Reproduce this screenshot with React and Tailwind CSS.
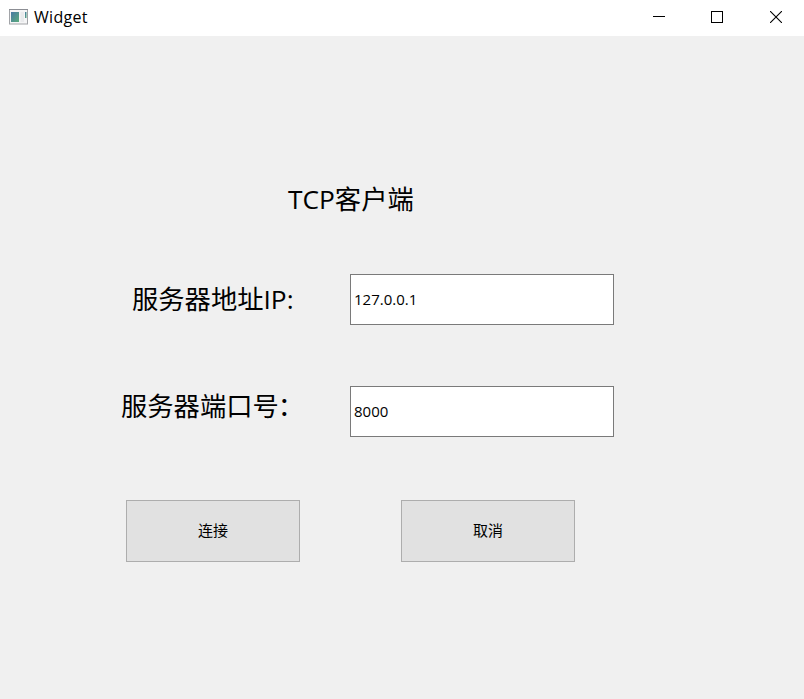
const uiFont = "font-['Open_Sans','Noto_Sans_CJK_SC',sans-serif]";

function AppIcon() {
  return (
    <svg className="-mt-0.5" width="19" height="16" viewBox="0 0 19 16">
      <defs>
        <linearGradient id="pane" x1="0" y1="0" x2="1" y2="1">
          <stop offset="0" stopColor="#4879a4" />
          <stop offset="1" stopColor="#5aab7c" />
        </linearGradient>
      </defs>
      <rect x="0.5" y="0.5" width="18" height="14.5" fill="#f5f5f6" stroke="#a2a4a8" />
      <path d="M0 .5h19" stroke="#8c8e94" />
      <rect x="2" y="3" width="8" height="10" fill="url(#pane)" />
      <rect x="11.5" y="3" width="3.5" height="10" fill="#e9eaec" />
      <rect x="16" y="3" width="1.5" height="6" fill="url(#pane)" />
    </svg>
  );
}

function TitleBar() {
  return (
    <header className="flex h-9 items-center bg-white pl-[9px] text-black">
      <AppIcon />
      <span className="-mt-0.5 ml-1.5 text-[16px] leading-5 tracking-[0.3px]">Widget</span>
      <div className="ml-auto flex pb-0.5">
        <button className="grid h-[34px] w-[58px] place-items-center" aria-label="Minimize">
          <svg width="12" height="12" stroke="#000" shapeRendering="crispEdges"><path d="M0 5.5H12" /></svg>
        </button>
        <button className="grid h-[34px] w-[58px] place-items-center" aria-label="Maximize">
          <svg width="12" height="12" stroke="#000" fill="none" shapeRendering="crispEdges"><path d="M.5.5h11v11H.5z" /></svg>
        </button>
        <button className="grid h-[34px] w-[58px] place-items-center pl-0.5" aria-label="Close">
          <svg width="12" height="12" stroke="#000" strokeWidth="1.1"><path d="M0 0L12 12M12 0L0 12" /></svg>
        </button>
      </div>
    </header>
  );
}

export default function App() {
  return (
    <div className={`flex h-[699px] w-[804px] flex-col bg-[#f0f0f0] text-black ${uiFont}`}>
      <TitleBar />
      <main className="flex flex-col">
        <h1 className="mt-[143px] ml-[288px] h-10 text-[26.3px] leading-10 whitespace-nowrap">TCP客户端</h1>
        <div className="mt-[55px] flex h-[51px] items-center">
          <label className="ml-[132px] w-[218px] pb-px text-[26.3px] leading-10 whitespace-nowrap">服务器地址IP:</label>
          <input className="h-[51px] w-[264px] border border-[#7a7a7a] bg-white px-[3px] pb-0.5 text-[15px]" defaultValue="127.0.0.1" />
        </div>
        <div className="mt-[61px] flex h-[51px] items-center">
          <label className="ml-[121px] w-[229px] pb-3 text-[26.3px] leading-10 whitespace-nowrap">服务器端口号<span className="-ml-px">：</span></label>
          <input className="h-[51px] w-[264px] border border-[#7a7a7a] bg-white px-[3px] pb-0.5 text-[15px]" defaultValue="8000" />
        </div>
        <div className="mt-[63px] ml-[126px] flex gap-[101px]">
          <button className="h-[62px] w-[174px] border border-[#adadad] bg-[#e1e1e1] pb-0.5 text-[15px]">连接</button>
          <button className="h-[62px] w-[174px] border border-[#adadad] bg-[#e1e1e1] pb-0.5 text-[15px]">取消</button>
        </div>
      </main>
    </div>
  );
}
